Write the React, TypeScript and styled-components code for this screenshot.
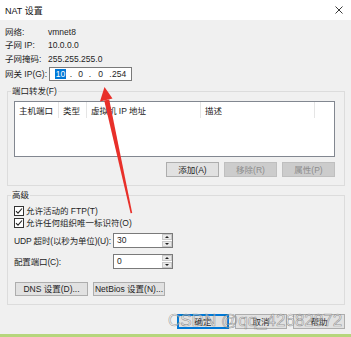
import React from "react";
import styled, { createGlobalStyle } from "styled-components";

const Global = createGlobalStyle`
  html, body { margin: 0; padding: 0; }
  body {
    width: 351px; height: 337px; overflow: hidden; background: #f0f0f0;
    font-family: "Liberation Sans", "Noto Sans CJK SC", sans-serif;
    font-size: 8.5px; color: #1e1e1e;
  }
  * { box-sizing: border-box; }
`;

const Window = styled.div`
  position: relative;
  width: 351px;
  height: 337px;
  display: flex;
  flex-direction: column;
  background: #f0f0f0;
  overflow: hidden;
`;

const TitleBar = styled.div`
  height: 20px;
  flex: none;
  background: #fff;
  display: flex;
  align-items: center;
  justify-content: space-between;
  padding: 0 8px 0 5px;
  font-size: 9px;
  color: #111;
`;

const Body = styled.div`
  flex: 1;
  display: flex;
  flex-direction: column;
  padding: 6px 6px 0 5px;
`;

const InfoGrid = styled.div`
  display: grid;
  grid-template-columns: 43px 1fr;
  grid-template-rows: 12px 13px 15px 16px;
  align-items: center;
  line-height: 10px;
`;

const IpBox = styled.div`
  margin-left: 1px;
  width: 83px;
  height: 14px;
  background: #fff;
  border: 1px solid #7a7a7a;
  display: flex;
  align-items: center;
  padding-left: 2px;
  line-height: 10px;
`;

const Octet = styled.span<{ $w: number; $align?: string }>`
  width: ${(p) => p.$w}px;
  text-align: ${(p) => p.$align || "center"};
  flex: none;
`;

const Selected = styled.span`
  background: #0078d7;
  color: #fff;
  padding: 0 1px;
`;

const Group = styled.fieldset<{ $top: number; $pb: number }>`
  margin: ${(p) => p.$top}px 0 0 2px;
  padding: 5px 9px ${(p) => p.$pb}px 6px;
  border: 1px solid #dcdcdc;
  min-width: 0;
`;

const Legend = styled.legend`
  padding: 0 1px;
  margin-left: -3px;
  line-height: 10px;
  font-size: 8.5px;
`;

const ListBox = styled.div`
  height: 56px;
  background: #fff;
  border: 1px solid #828790;
`;

const HeaderRow = styled.div`
  display: flex;
  height: 16px;
`;

const HeaderCell = styled.div<{ $w: number }>`
  width: ${(p) => p.$w}px;
  flex: none;
  padding-left: 4px;
  border-right: 1px solid #e5e5e5;
  display: flex;
  align-items: center;
  color: #222;
`;

const ButtonRow = styled.div<{ $top: number; $gap: number; $justify?: string; $indent?: number }>`
  display: flex;
  justify-content: ${(p) => p.$justify || "flex-end"};
  gap: ${(p) => p.$gap}px;
  margin-top: ${(p) => p.$top}px;
  padding-left: ${(p) => p.$indent || 0}px;
`;

const Button = styled.div<{ $w: number; $h?: number; $disabled?: boolean; $default?: boolean }>`
  width: ${(p) => p.$w}px;
  height: ${(p) => p.$h || 15}px;
  flex: none;
  display: flex;
  align-items: center;
  justify-content: center;
  background: ${(p) => (p.$disabled ? "#cccccc" : "#e1e1e1")};
  color: ${(p) => (p.$disabled ? "#8d8d8d" : "#1e1e1e")};
  border: 1px solid ${(p) => (p.$default ? "#0078d7" : p.$disabled ? "#bfbfbf" : "#adadad")};
  box-shadow: ${(p) => (p.$default ? "inset 0 0 0 1px #0078d7" : "none")};
  line-height: 10px;
  white-space: nowrap;
`;

const CheckRow = styled.label`
  display: flex;
  align-items: center;
  height: 12px;
  gap: 2px;
  line-height: 10px;
  white-space: nowrap;
`;

const CheckBox = styled.span`
  width: 10px;
  height: 10px;
  flex: none;
  background: #fff;
  border: 1px solid #333;
  display: flex;
  align-items: center;
  justify-content: center;
`;

const FieldRow = styled.div<{ $top: number }>`
  display: flex;
  align-items: center;
  height: 15px;
  margin-top: ${(p) => p.$top}px;
  line-height: 10px;
`;

const FieldLabel = styled.span`
  width: 99px;
  flex: none;
  white-space: nowrap;
  letter-spacing: -0.15px;
`;

const SpinBox = styled.div`
  width: 60px;
  height: 15px;
  background: #fff;
  border: 1px solid #7a7a7a;
  display: flex;
`;

const SpinText = styled.span`
  flex: 1;
  padding: 1px 0 0 3px;
  line-height: 11px;
`;

const SpinButtons = styled.div`
  width: 11px;
  display: flex;
  flex-direction: column;
  gap: 1px;
  padding: 0 0 0 1px;
`;

const SpinBtn = styled.div<{ $up?: boolean }>`
  flex: 1;
  background: #e9e9e9;
  border: 1px solid #c9c9c9;
  display: flex;
  align-items: center;
  justify-content: center;
  &::after {
    content: "";
    border-left: 2px solid transparent;
    border-right: 2px solid transparent;
    ${(p) => (p.$up ? "border-bottom: 2px solid #222;" : "border-top: 2px solid #222;")}
  }
`;

const GreenBar = styled.div`
  height: 3px;
  flex: none;
  background: #b6d67c;
`;

const Watermark = styled.div`
  position: absolute;
  left: 168px;
  top: 311px;
  font-family: "Liberation Sans", sans-serif;
  font-size: 17px;
  line-height: 20px;
  color: rgba(255, 255, 255, 0.45);
  -webkit-text-stroke: 0.6px rgba(90, 90, 90, 0.6);
  white-space: nowrap;
  pointer-events: none;
`;

const Overlay = styled.svg`
  position: absolute;
  left: 0;
  top: 0;
  pointer-events: none;
`;

const Spin = ({ value }: { value: string }) => (
  <SpinBox>
    <SpinText>{value}</SpinText>
    <SpinButtons>
      <SpinBtn $up />
      <SpinBtn />
    </SpinButtons>
  </SpinBox>
);

const Check = ({ label }: { label: string }) => (
  <CheckRow>
    <CheckBox>
      <svg width="8" height="8" viewBox="0 0 8 8">
        <polyline points="1,4.2 3,6.2 7,1.5" fill="none" stroke="#222" strokeWidth="1.1" />
      </svg>
    </CheckBox>
    {label}
  </CheckRow>
);

export default function App() {
  return (
    <Window>
      <Global />
      <TitleBar>
        <span>NAT 设置</span>
        <svg width="8" height="8" viewBox="0 0 8 8">
          <path d="M0.5 0.5 L7.5 7.5 M7.5 0.5 L0.5 7.5" stroke="#222" strokeWidth="0.9" />
        </svg>
      </TitleBar>
      <Body>
        <InfoGrid>
          <span>网络:</span>
          <span>vmnet8</span>
          <span>子网 IP:</span>
          <span>10.0.0.0</span>
          <span>子网掩码:</span>
          <span>255.255.255.0</span>
          <span>网关 IP(G):</span>
          <IpBox>
            <Octet $w={17}>
              <Selected>10</Selected>
            </Octet>
            <Octet $w={4}>.</Octet>
            <Octet $w={15}>0</Octet>
            <Octet $w={4}>.</Octet>
            <Octet $w={17}>0</Octet>
            <Octet $w={3}>.</Octet>
            <Octet $w={20} $align="left">254</Octet>
          </IpBox>
        </InfoGrid>

        <Group $top={4} $pb={8}>
          <Legend>端口转发(F)</Legend>
          <ListBox>
            <HeaderRow>
              <HeaderCell $w={44}>主机端口</HeaderCell>
              <HeaderCell $w={28}>类型</HeaderCell>
              <HeaderCell $w={114}>虚拟机 IP 地址</HeaderCell>
              <HeaderCell $w={114}>描述</HeaderCell>
            </HeaderRow>
          </ListBox>
          <ButtonRow $top={5} $gap={5}>
            <Button $w={53}>添加(A)</Button>
            <Button $w={53} $disabled>移除(R)</Button>
            <Button $w={53} $disabled>属性(P)</Button>
          </ButtonRow>
        </Group>

        <Group $top={4} $pb={8}>
          <Legend>高级</Legend>
          <Check label="允许活动的 FTP(T)" />
          <Check label="允许任何组织唯一标识符(O)" />
          <FieldRow $top={4}>
            <FieldLabel>UDP 超时(以秒为单位)(U):</FieldLabel>
            <Spin value="30" />
          </FieldRow>
          <FieldRow $top={6}>
            <FieldLabel>配置端口(C):</FieldLabel>
            <Spin value="0" />
          </FieldRow>
          <ButtonRow $top={13} $gap={5} $justify="flex-start" $indent={1}>
            <Button $w={73} $h={14}>DNS 设置(D)...</Button>
            <Button $w={72} $h={14}>NetBios 设置(N)...</Button>
          </ButtonRow>
        </Group>

        <ButtonRow $top={9} $gap={6}>
          <Button $w={52} $default>确定</Button>
          <Button $w={52}>取消</Button>
          <Button $w={52}>帮助</Button>
        </ButtonRow>
      </Body>
      <GreenBar />
      <Watermark>CSDN @qq_42682872</Watermark>
      <Overlay width="351" height="337" viewBox="0 0 351 337">
        <polygon points="104.5,87 100,101.5 112.5,98.5" fill="#e8302a" />
        <polygon points="104.2,100.5 109.2,99.4 132.2,213 130.6,213.3" fill="#e8302a" />
      </Overlay>
    </Window>
  );
}
